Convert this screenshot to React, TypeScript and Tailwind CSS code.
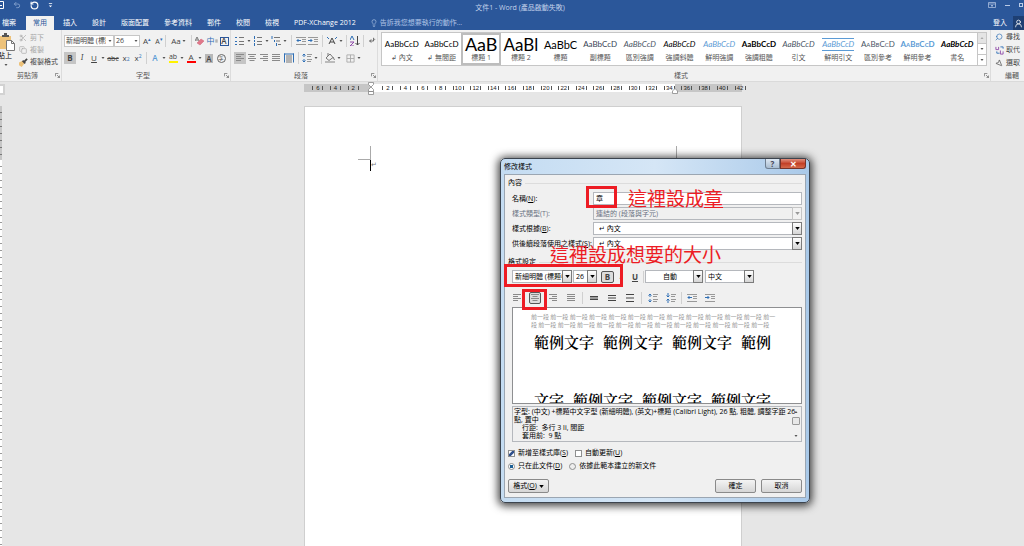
import type { ReactNode } from "react";
import { Lightbulb, RotateCw, Undo2, Search, Scissors, Copy, MousePointer2, UserRound } from "lucide-react";

const tabs = ["插入", "設計", "版面配置", "參考資料", "郵件", "校閱", "檢視", "PDF-XChange 2012"];

const styles = [
  { name: "↲ 內文", sample: "AaBbCcD", look: "text-[8px]" },
  { name: "↲ 無間距", sample: "AaBbCcD", look: "text-[8px]" },
  { name: "標題 1", sample: "AaB", look: "text-[18px]" },
  { name: "標題 2", sample: "AaBl", look: "text-[17px]" },
  { name: "標題", sample: "AaBbC", look: "text-[11px]" },
  { name: "副標題", sample: "AaBbCcD", look: "text-[8px] text-gray-700" },
  { name: "區別強調", sample: "AaBbCcD", look: "text-[8px] italic text-gray-600" },
  { name: "強調斜體", sample: "AaBbCcD", look: "text-[8px] italic" },
  { name: "鮮明強調", sample: "AaBbCcD", look: "text-[8px] italic text-[#5b9bd5]" },
  { name: "強調粗體", sample: "AaBbCcD", look: "text-[8px] font-bold" },
  { name: "引文", sample: "AaBbCcD", look: "text-[8px] italic text-gray-600" },
  { name: "鮮明引文", sample: "AaBbCcD", look: "text-[8px] italic text-[#5b9bd5] border-y border-[#5b9bd5]" },
  { name: "區別參考", sample: "AaBbCcD", look: "text-[8px] [font-variant:small-caps] text-gray-600" },
  { name: "鮮明參考", sample: "AaBbCcD", look: "text-[8px] [font-variant:small-caps] font-bold text-[#5b9bd5]" },
  { name: "書名", sample: "AaBbCcD", look: "text-[8px] font-bold italic" },
];

function Caret() {
  return (
    <svg viewBox="1 0 6 8" className="h-2 w-[6px] shrink-0" aria-hidden="true">
      <path d="M2.500 3h3L4 5z" fill="#555" />
    </svg>
  );
}

function Sep({ className = "mx-[2px]" }: { className?: string }) {
  return <span className={`h-3 w-px shrink-0 bg-[#d0d0d0] ${className}`} />;
}

function Tool({ label, className = "w-3", children }: { label: string; className?: string; children: ReactNode }) {
  return (
    <button type="button" aria-label={label} className={`flex h-3 shrink-0 items-center justify-center text-[8px] leading-none text-[#444] ${className}`}>
      {children}
    </button>
  );
}

function Glyph({ children, className = "h-[10px] w-[10px]" }: { children: ReactNode; className?: string }) {
  return (
    <svg viewBox="0 0 10 10" className={`shrink-0 ${className}`} fill="none" stroke="#777" aria-hidden="true">
      {children}
    </svg>
  );
}

function Lines({ kind }: { kind: "left" | "center" | "right" | "full" }) {
  const d = {
    left: "M1 1.5h8M1 3.5h5M1 5.5h8M1 7.5h5",
    center: "M1 1.5h8M2.5 3.5h5M1 5.5h8M2.5 7.5h5",
    right: "M1 1.5h8M4 3.5h5M1 5.5h8M4 7.5h5",
    full: "M1 1.5h8M1 3.5h8M1 5.5h8M1 7.5h8",
  }[kind];
  return <Glyph><path d={d} stroke="#8a8a8a" /></Glyph>;
}

function Indent({ out }: { out?: boolean }) {
  return (
    <Glyph>
      <path d="M0 1.5h10M6 3.5h4M6 5.5h4M0 8.5h10" stroke="#999" />
      <path d={out ? "M5 4.500H1M2.500 3 1 4.500 2.500 6" : "M0 4.500h4M2.500 3 4 4.500 2.500 6"} stroke="#2f6fb5" />
    </Glyph>
  );
}

function Spacing({ tight }: { tight?: boolean }) {
  return (
    <Glyph>
      <path d="M5 1.5h5M5 3.5h4M5 6.5h5M5 8.5h4" stroke="#999" />
      <path d={tight ? "M2 0v4M.5 2.500 2 4l1.500-1.500M2 10V6M.5 7.500 2 6l1.500 1.500" : "M2 4V1M.5 2.500 2 1l1.500 1.500M2 6v3M.5 7.500 2 9l1.500-1.500"} stroke="#2f6fb5" />
    </Glyph>
  );
}

function Group({ title, className, launcher = true, children }: { title: string; className: string; launcher?: boolean; children: ReactNode }) {
  return (
    <section className={`flex flex-col border-r border-[#dcdcdc] ${className}`}>
      <div className="flex h-10 flex-col gap-[5px] pt-[5px]">{children}</div>
      <div className="flex h-[10px] items-center pr-[1px]">
        <span className="flex-1 whitespace-nowrap text-center leading-none text-[#555]">{title}</span>
        {launcher && (
          <button type="button" aria-label={`${title}設定`}>
            <svg viewBox="0 0 6 6" className="h-[5px] w-[5px]" fill="none" stroke="#777">
              <path d="M.5 4V.5H4M2.5 2.5l3 3M5.5 3v2.5H3" />
            </svg>
          </button>
        )}
      </div>
    </section>
  );
}

function RibbonSelect({ label, value, className }: { label: string; value: string; className: string }) {
  return (
    <div className={`relative h-3 ${className}`}>
      <select aria-label={label} className="h-full w-full appearance-none overflow-hidden border border-[#c6c6c6] bg-white pr-[7px] pl-[1px] text-[7px] leading-[10px]">
        <option>{value}</option>
      </select>
      <span className="pointer-events-none absolute top-[2px] right-px bg-white"><Caret /></span>
    </div>
  );
}

function DialogSelect({ id, label, value, disabled, className = "w-full", pad = "pl-[2px]" }: { id?: string; label?: string; value: string; disabled?: boolean; className?: string; pad?: string }) {
  return (
    <div className={`relative h-[13px] shrink-0 ${className}`}>
      <select
        id={id}
        aria-label={label}
        disabled={disabled}
        className={`block h-full w-full appearance-none overflow-hidden border border-[#b5b8bd] pr-[9px] text-[7px] leading-[11px] ${pad} ${disabled ? "bg-[#f0f0f0] text-gray-500" : "bg-white text-black"}`}
      >
        <option>{value}</option>
      </select>
      <span className={`pointer-events-none absolute top-0 right-0 flex h-[13px] w-[10px] items-center justify-center border ${disabled ? "border-[#c5c5c5] bg-[#f2f2f2]" : "border-[#7b7b7b] bg-linear-to-b from-white to-[#d5d5d5]"}`}>
        <svg viewBox="0 0 6 4" className="h-[3px] w-[5px]" aria-hidden="true">
          <path d="M0 0h6L3 4z" fill={disabled ? "#999" : "#000"} />
        </svg>
      </span>
    </div>
  );
}

function TitleBar() {
  return (
    <header className="bg-[#2b579a] text-white">
      <div className="flex h-4 items-center">
        <div className="flex w-[52px] items-center gap-[9px] pb-[6px]">
          <button type="button" aria-label="儲存" className="w-1">
            <svg viewBox="0 0 4 8" className="h-2 w-1" fill="none" stroke="white"><path d="M0 .5h3.500v7H0M0 4.500h2" /></svg>
          </button>
          <button type="button" aria-label="復原" className="text-[#7c9bc9]"><Undo2 size={8} strokeWidth={3} /></button>
          <button type="button" aria-label="重複"><RotateCw size={9} strokeWidth={3} className="-scale-x-100" /></button>
          <button type="button" aria-label="自訂快速存取工具列">
            <svg viewBox="0 0 6 6" className="h-[5px] w-[5px]" fill="white"><path d="M1 0h4v1H1zM1 3h4L3 5z" /></svg>
          </button>
        </div>
        <h1 className="flex-1 text-center text-[7px] leading-[10px] text-[#c3d2ea]">文件1 - Word (產品啟動失敗)</h1>
        <div className="flex w-[36px] items-center gap-[9px] pb-[6px] text-[#b9cae6]">
          <button type="button" aria-label="功能區顯示選項">
            <svg viewBox="0 0 8 6" className="h-[6px] w-2" fill="none" stroke="currentColor"><path d="M.5.5h7v5h-7zM.5 2h7M4 5V3M3 4l1-1 1 1" strokeWidth=".7" /></svg>
          </button>
          <button type="button" aria-label="最小化" className="h-px w-[5px] bg-[#b9cae6]" />
          <button type="button" aria-label="還原" className="h-1 w-1 border border-current" />
        </div>
      </div>
      <nav className="flex h-[14px] items-center text-[7px] leading-[10px]">
        <button type="button" className="pl-[2px]">檔案</button>
        <button type="button" className="ml-[10px] h-[14px] bg-[#f1f1f1] px-[7px] text-[#2b579a]">常用</button>
        <div className="ml-[9px] flex gap-[15px]">
          {tabs.map((tab) => (
            <button key={tab} type="button" className="whitespace-nowrap">{tab}</button>
          ))}
        </div>
        <button type="button" className="ml-[14px] flex items-center gap-[2px] whitespace-nowrap text-[#afc4e6]">
          <Lightbulb size={8} />告訴我您想要執行的動作...
        </button>
        <span className="flex-1" />
        <button type="button">登入</button>
        <button type="button" aria-label="共用" className="ml-[6px] flex h-[14px] w-[11px] items-center justify-center bg-[#1e3f73]"><UserRound size={9} /></button>
      </nav>
    </header>
  );
}

function Ribbon() {
  return (
    <div className="flex border-b border-[#dadada] bg-[#f1f1f1] text-[7px] leading-[10px] text-[#444]">
      <Group title="剪貼簿" className="w-[62px] shrink-0">
        <div className="-mt-[2px] flex gap-1">
          <button type="button" className="flex w-[15px] flex-col items-start">
            <svg viewBox="0 0 15 18" className="h-[18px] w-[15px]" fill="none">
              <path d="M0 3h11v13H0z" fill="#edc27a" />
              <path d="M2 4V2h2V0h3v2h2v2z" fill="#555" />
              <path d="M6.500 7.500h5l3 3v7h-8z" fill="#fff" stroke="#777" />
              <path d="M11.500 7.500v3h3" stroke="#777" />
            </svg>
            <span className="-ml-[2px] whitespace-nowrap text-black">貼上</span>
            <span className="ml-[3px]"><Caret /></span>
          </button>
          <div className="flex flex-col gap-[2px] whitespace-nowrap">
            <button type="button" className="flex items-center gap-[3px] text-[#a6a6a6]"><Scissors size={8} />剪下</button>
            <button type="button" className="flex items-center gap-[3px] text-[#a6a6a6]"><Copy size={8} />複製</button>
            <button type="button" className="flex items-center gap-[2px]">
              <Glyph className="h-[9px] w-[9px]"><path d="m0 5 4-2 2 3-3 4-3-2z" fill="#edc27a" stroke="none" /><path d="m4 3 3 3M6 4l3-3" strokeWidth="2" stroke="#444" /></Glyph>
              複製格式
            </button>
          </div>
        </div>
      </Group>

      <Group title="字型" className="w-[169px] shrink-0">
        <div className="flex items-center pl-[2px]">
          <RibbonSelect label="字型" value="新細明體 (標題中文)" className="w-[50px]" />
          <RibbonSelect label="字型大小" value="26" className="w-[26px]" />
          <Tool label="放大字型" className="ml-px w-3">A<sup className="text-[5px] text-[#2f6fb5]">▴</sup></Tool>
          <Tool label="縮小字型"><span className="text-[7px]">A</span><sup className="text-[5px] text-[#2f6fb5]">▾</sup></Tool>
          <Sep className="mr-[3px]" />
          <Tool label="大小寫轉換" className="w-5">Aa<Caret /></Tool>
          <Sep />
          <Tool label="清除格式">
            <Glyph><path d="M0 5 2 1l2 4M1 4h2" /><path d="m2 7 4-4 3 2-4 4z" fill="#e0788a" stroke="#d06074" strokeWidth=".5" /></Glyph>
          </Tool>
          <Tool label="注音標示"><span className="text-[#2f6fb5]">中</span><Glyph className="h-2 w-[3px]"><path d="M1 1.500h8M1 5h8M1 8.500h8" strokeWidth="2" /></Glyph></Tool>
          <Tool label="圍繞字元"><span className="flex h-[9px] w-[9px] items-center justify-center border border-[#2b579a] text-[8px] font-semibold">A</span></Tool>
        </div>
        <div className="flex items-center pl-[2px]">
          <Tool label="粗體" className="w-3 bg-[#c5c5c5] font-bold">B</Tool>
          <Tool label="斜體" className="w-3 font-serif italic">I</Tool>
          <Tool label="底線" className="w-3 underline">U</Tool>
          <Caret />
          <Tool label="刪除線" className="w-[14px]"><span className="text-[7px] line-through">abc</span></Tool>
          <Tool label="下標">x<sub className="text-[5px] text-[#2f6fb5]">2</sub></Tool>
          <Tool label="上標">x<sup className="text-[5px] text-[#2f6fb5]">2</sup></Tool>
          <Sep />
          <Tool label="文字效果"><span className="font-semibold text-[#5b9bd5]">A</span></Tool>
          <Caret />
          <Tool label="醒目提示"><span className="w-[9px] border-b-2 border-[#fff200] text-[7px] leading-[8px]">ab</span></Tool>
          <Caret />
          <Tool label="字型色彩"><span className="w-[9px] border-b-2 border-[#f00] leading-[8px]">A</span></Tool>
          <Caret />
          <Tool label="字元網底"><span className="bg-[#b8b8b8] px-px leading-[9px] font-semibold">A</span></Tool>
          <Tool label="圍繞字"><span className="flex h-[9px] w-[9px] items-center justify-center rounded-full border border-[#666] text-[5px]">字</span></Tool>
        </div>
      </Group>

      <Group title="段落" className="w-[147px] shrink-0">
        <div className="flex items-center pl-[3px]">
          <Tool label="項目符號"><Glyph><path d="M4 1.500h5M4 5.500h5M4 8.500h5" /><path d="M0 1.500h2M0 5.500h2M0 8.500h2" stroke="#2f6fb5" /></Glyph></Tool>
          <Caret />
          <Tool label="編號"><Glyph><path d="M4 1.500h5M4 5.500h5M4 8.500h5" /><path d="M1.500 0v3M1.500 4v2M1.500 7v3" stroke="#2f6fb5" /></Glyph></Tool>
          <Caret />
          <Tool label="多層次清單"><Glyph><path d="M3 1.500h6M5 5h4M7 8.500h3" /><path d="M1 0v3M3.500 4v2M5.500 7v3" stroke="#2f6fb5" /></Glyph></Tool>
          <Caret />
          <Sep className="mx-[3px]" />
          <Tool label="減少縮排"><Indent out /></Tool>
          <Tool label="增加縮排"><Indent /></Tool>
          <Sep className="mx-[3px]" />
          <Tool label="亞洲方式配置"><Glyph><path d="m2 8 3-6 3 6M3 6h4" stroke="#444" /><path d="M0 1l2 2M10 1 8 3" stroke="#2f6fb5" /></Glyph></Tool>
          <Caret />
          <Sep />
          <Tool label="排序"><Glyph><path d="m0 4 2-4 2 4" stroke="#2f6fb5" /><path d="M0 6h4L0 10h4" stroke="#8e4ba8" /><path d="M7.500 0v9M5.500 7l2 2 2-2" stroke="#444" /></Glyph></Tool>
          <Sep />
          <Tool label="顯示編輯標記"><Glyph className="h-2 w-2"><path d="M7 1v4H2M4 3 2 5l2 2M8 3h1" stroke="#444" /></Glyph></Tool>
        </div>
        <div className="flex items-center pl-[3px]">
          <Tool label="靠左對齊" className="w-3 bg-[#c5c5c5]"><Lines kind="left" /></Tool>
          <Tool label="置中"><Lines kind="center" /></Tool>
          <Tool label="靠右對齊"><Lines kind="right" /></Tool>
          <Tool label="左右對齊"><Lines kind="full" /></Tool>
          <Tool label="分散對齊" className="w-[14px]"><Glyph><path d="M.5.500v9M9.500.500v9M0 1h10" stroke="#2f6fb5" /><path d="M2 3h6M2 5h6M2 7h6M2 9h6" /></Glyph></Tool>
          <Sep />
          <Tool label="行距"><Spacing /></Tool>
          <Caret />
          <Sep />
          <Tool label="網底"><Glyph><path d="m1 5 4-4 3 3.500-4 3zM8 4l1.500 3M3 0v3" /><path d="M0 9h10" stroke="#bbb" strokeWidth="2" /></Glyph></Tool>
          <Caret />
          <Tool label="框線" className="ml-[2px] w-3"><Glyph className="h-[9px] w-[9px]"><path d="M1 1h8v8H1zM5 1v8M1 5h8" stroke="#aaa" /></Glyph></Tool>
          <Caret />
        </div>
      </Group>

      <Group title="樣式" className="min-w-0 flex-1">
        <div className="-mt-[3px] mr-[3px] ml-[3px] flex h-[34px] shrink-0 border border-[#c6c6c6] bg-white">
          {styles.map((s) => (
            <button
              key={s.name}
              type="button"
              className={`flex min-w-0 flex-1 flex-col items-center overflow-hidden ${s.name === "標題 1" ? "border-2 border-[#bdbdbd]" : "p-[2px]"}`}
            >
              <span className="flex h-[18px] w-full items-center justify-center text-black">
                <span className={`font-[Lato,sans-serif] leading-[11px] ${s.look}`}>{s.sample}</span>
              </span>
              <span className="whitespace-nowrap text-[7px] leading-[10px] text-[#555]">{s.name}</span>
            </button>
          ))}
          <div className="flex w-[9px] shrink-0 flex-col divide-y divide-[#c6c6c6] border-l border-[#c6c6c6]">
            <button type="button" aria-label="上一列" className="flex flex-1 items-center justify-center bg-[#e4e4e4]"><span className="rotate-180 opacity-40"><Caret /></span></button>
            <button type="button" aria-label="下一列" className="flex flex-1 items-center justify-center"><Caret /></button>
            <button type="button" aria-label="其他" className="flex flex-1 items-center justify-center"><Caret /></button>
          </div>
        </div>
      </Group>

      <div className="flex w-[33px] shrink-0 flex-col gap-[3px] overflow-hidden whitespace-nowrap pt-[2px] pl-1">
        <button type="button" className="flex items-center gap-[3px]"><Search size={8} className="shrink-0 -scale-x-100 text-[#2f6fb5]" />尋找</button>
        <button type="button" className="flex items-center gap-[2px]"><Glyph className="h-[9px] w-[9px]"><path d="M1 1v3h3V1M6 5v4h3V6" stroke="#8e4ba8" /><path d="M2 6v2h3M6 1h3v2" stroke="#2f6fb5" /></Glyph>取代</button>
        <button type="button" className="flex items-center gap-[3px]"><MousePointer2 size={8} className="shrink-0 -scale-x-100 rotate-90" />選取<Caret /></button>
        <span className="pl-[10px] leading-[10px] text-[#555]">編輯</span>
      </div>
    </div>
  );
}

function RulerCells({ values, className }: { values: number[]; className: string }) {
  return (
    <div className={`flex shrink-0 ${className}`}>
      {values.map((n) => (
        <span key={n} className="flex flex-1 items-center justify-center">
          <span className="flex w-[11px] items-center justify-between">
            <i className="h-1 w-px shrink-0 bg-[#555]" />
            <b className="flex w-[9px] shrink-0 justify-center font-normal">{n}</b>
            <i className="h-1 w-px shrink-0 bg-[#555]" />
          </span>
        </span>
      ))}
    </div>
  );
}

function Ruler() {
  const main = Array.from({ length: 17 }, (_, i) => (i + 1) * 2);
  return (
    <div className="relative flex h-2 w-[438px] bg-linear-[90deg,#c6c6c6_66px,#fff_66px,#fff_371px,#c6c6c6_371px] pl-[5px] font-['Liberation_Sans',sans-serif] text-[6px] leading-[8px] text-[#222]">
      <RulerCells values={[6, 4, 2]} className="w-[53px]" />
      <div className="relative flex w-[17px] shrink-0 justify-center">
        <svg viewBox="0 0 6 13" className="absolute -top-[2px] h-[13px] w-[6px]" fill="#fff" stroke="#888" strokeWidth=".8">
          <path d="M.5.500h5v2L3 5 .5 2.500zM3 5l2.500 2.500v2h-5v-2zM.5 9.500h5v3h-5z" />
        </svg>
      </div>
      <RulerCells values={main} className="w-[299px]" />
      <div className="flex min-w-0 flex-1"><RulerCells values={[36, 38, 40, 42]} className="w-[71px]" /></div>
      <svg viewBox="0 0 6 6" className="absolute top-[4px] left-[368px] h-[6px] w-[6px]" fill="#fff" stroke="#888" strokeWidth=".8">
        <path d="M3 .5 5.500 3v2.500h-5V3z" />
      </svg>
    </div>
  );
}

function Document() {
  return (
    <main className="flex flex-1 flex-col">
      <div className="flex h-[24px] items-start pt-[2px]">
        <button type="button" aria-label="定位點" className="h-[11px] w-[5px] border-2 border-l-0 border-[#d2d2d2] bg-white" />
        <div className="flex flex-1 justify-center pl-[17px]"><Ruler /></div>
      </div>
      <div className="flex flex-1">
        <div className="flex w-[2px] flex-col bg-white">
          <div className="h-[54px] bg-[repeating-linear-gradient(#c6c6c6_0,#c6c6c6_6px,#777_6px,#777_7px)]" />
          <div className="flex-1 bg-[repeating-linear-gradient(#fff_0,#fff_6px,#999_6px,#999_7px)]" />
        </div>
        <div className="flex flex-1 justify-center pl-5">
          <div className="w-[438px] border border-b-0 border-[#cfcfcf] bg-white pt-[39px] pl-[53px]">
            <div className="flex h-[14px] w-[331px] justify-between">
              <span className="w-[13px] border-r border-b border-[#aaa]" />
              <span className="w-[13px] border-b border-l border-[#aaa]" />
            </div>
            <p className="flex h-[11px] items-center pl-3 text-[7px] text-[#777]"><span className="h-[11px] w-px bg-black" />↵</p>
          </div>
        </div>
      </div>
    </main>
  );
}

function Legend({ children }: { children: ReactNode }) {
  return (
    <legend className="flex w-full items-center gap-[3px] px-[3px] leading-[10px] after:h-px after:flex-1 after:bg-[#dcdcdc]">{children}</legend>
  );
}

function Key({ children }: { children: string }) {
  return <>(<u>{children}</u>)</>;
}

function Preview() {
  const word = "範例文字";
  return (
    <div className="mr-[3px] ml-[7px] h-[97px] overflow-hidden border border-[#8e8f91] bg-white text-black">
      <p className="px-[18px] pt-[5px] font-['Noto_Sans_CJK_TC',sans-serif] text-[6px] leading-[8px] whitespace-nowrap text-[#999]">
        {"前一段 ".repeat(12)}前一<br />段 {"前一段 ".repeat(12)}
      </p>
      <div className="px-[21px] font-['Noto_Serif_CJK_TC','Noto_Sans_CJK_TC',serif] text-[15px] leading-[22px] font-semibold whitespace-nowrap">
        <p className="mt-[2px] flex gap-[9px]"><span>{word}</span><span>{word}</span><span>{word}</span><span>範例</span></p>
        <p className="mt-[36px] flex gap-[9px]"><span>文字</span><span>{word}</span><span>{word}</span><span>{word}</span></p>
      </div>
    </div>
  );
}

function StyleDialog() {
  return (
    <div role="dialog" aria-label="修改樣式" className="absolute top-[158px] left-[500px] flex w-[310px] flex-col rounded-[5px] border border-[#3c444e] bg-linear-to-r from-[#c4dcf2] via-[#d5e6f6] to-[#a9c9e9] px-[3px] pb-1 text-[7px] leading-[10px] text-black shadow-[0_1px_8px_2px_rgba(0,0,0,0.75)]">
      <div className="flex h-[15px] items-start">
        <h2 className="flex-1 pt-[3px]">修改樣式</h2>
        <button type="button" aria-label="說明" className="h-[10px] w-[15px] rounded-bl-[3px] border border-t-0 border-[#6f7f91] bg-linear-to-b from-[#dde8f3] to-[#a9bdd1] text-center text-[8px] leading-[8px] font-bold text-[#445]">?</button>
        <button type="button" aria-label="關閉" className="h-[10px] w-[26px] rounded-br-[3px] border border-t-0 border-[#75332a] bg-linear-to-b from-[#e0907f] via-[#c34027] to-[#d4684a] text-center text-[8px] leading-[8px] font-bold text-white">✕</button>
      </div>
      <form className="border border-[#9ba6b2] bg-[#f0f0f0] pt-[3px] pb-[4px]" onSubmit={(e) => e.preventDefault()}>
        <fieldset>
          <Legend>內容</Legend>
          <div className="mt-[4px] grid grid-cols-[81px_1fr] items-center gap-y-[2px] pr-[3px] pl-[7px] whitespace-nowrap">
            <label htmlFor="name">名稱<Key>N</Key>:</label>
            <input id="name" defaultValue="章" className="h-[13px] w-full min-w-0 border border-[#b5b8bd] bg-white pb-[2px] pl-[2px]" />
            <label htmlFor="type" className="text-gray-500">樣式類型(T):</label>
            <DialogSelect id="type" value="連結的 (段落與字元)" disabled />
            <label htmlFor="based">樣式根據<Key>B</Key>:</label>
            <DialogSelect id="based" value="↵ 內文" pad="pl-[5px]" />
            <label htmlFor="next">供後續段落使用之樣式<Key>S</Key>:</label>
            <DialogSelect id="next" value="↵ 內文" pad="pl-[5px]" />
          </div>
        </fieldset>
        <fieldset className="mt-[7px]">
          <Legend>格式設定</Legend>
          <div className="mt-[3px] flex items-center pl-[7px]">
            <DialogSelect label="字型" value="新細明體 (標題中文)" className="w-[60px]" />
            <DialogSelect label="大小" value="26" className="ml-px w-6" />
            <Tool label="粗體" className="ml-1 w-[13px] rounded-[2px] border border-[#555] bg-[#dcdcdc] font-bold">B</Tool>
            <Tool label="斜體" className="w-[14px] font-serif font-bold italic">I</Tool>
            <Tool label="底線" className="w-[14px] font-bold underline">U</Tool>
            <Sep className="mx-px" />
            <DialogSelect label="字型色彩" value="自動" className="w-[58px]" pad="pl-[17px]" />
            <DialogSelect label="語言" value="中文" className="ml-[2px] w-[49px]" />
          </div>
          <div className="mt-[9px] mb-[3px] flex items-center gap-[6px] pl-[6px]">
            <Tool label="靠左"><Lines kind="left" /></Tool>
            <Tool label="置中" className="w-3 rounded-[2px] border border-[#555] bg-[#dcdcdc]"><Lines kind="center" /></Tool>
            <Tool label="靠右"><Lines kind="right" /></Tool>
            <Tool label="左右對齊"><Lines kind="full" /></Tool>
            <Sep className="-mx-px" />
            <Tool label="單行間距"><Glyph><path d="M1 3.500h8M1 5h8M1 6.500h8" stroke="#444" /></Glyph></Tool>
            <Tool label="1.5 倍行高"><Glyph><path d="M1 2.500h8M1 5h8M1 7.500h8" stroke="#444" /></Glyph></Tool>
            <Tool label="2 倍行高"><Glyph><path d="M1 1.500h8M1 5h8M1 8.500h8" stroke="#444" /></Glyph></Tool>
            <Sep className="-mx-px" />
            <Tool label="增加間距"><Spacing /></Tool>
            <Tool label="減少間距"><Spacing tight /></Tool>
            <Sep className="-mx-[2px]" />
            <Tool label="減少縮排"><Indent out /></Tool>
            <Tool label="增加縮排"><Indent /></Tool>
          </div>
        </fieldset>
        <Preview />
        <div className="mt-[2px] mr-[3px] ml-[7px] flex h-9 border border-[#b5b8bd] text-[7px] leading-[8px] whitespace-nowrap">
          <div className="min-w-0 flex-1 pt-px pl-[1px]">
            <p>字型: (中文) +標題中文字型 (新細明體), (英文)+標題 (Calibri Light), 26 點, 粗體, 調整字距 26<br />點, 置中</p>
            <p className="pl-2">行距: &nbsp;多行 3 li, 間距</p>
            <p className="pl-2">套用前: &nbsp;9 點</p>
          </div>
          <div className="flex w-[10px] shrink-0 flex-col items-center justify-between py-px">
            <span className="rotate-180"><Caret /></span>
            <span className="mb-[6px] h-2 w-2 rounded-[1px] border border-[#999] bg-[#e8e8e8]" />
            <Caret />
          </div>
        </div>
        <div className="mt-[6px] flex gap-[7px] px-[3px]">
          <label className="flex items-center gap-[3px]">
            <input type="checkbox" defaultChecked className="h-[7px] w-[7px] appearance-none border border-[#8e8f8f] bg-white checked:bg-[linear-gradient(135deg,#fff_25%,#30508c_40%,#30508c_60%,#fff_75%)]" />
            <span>新增至樣式庫<Key>S</Key></span>
          </label>
          <label className="flex items-center gap-[3px]">
            <input type="checkbox" className="h-[7px] w-[7px] appearance-none border border-[#8e8f8f] bg-white" />
            <span>自動更新<Key>U</Key></span>
          </label>
        </div>
        <div className="mt-[3px] flex gap-[7px] px-[3px]">
          <label className="flex items-center gap-[3px]">
            <input type="radio" name="scope" defaultChecked className="h-[7px] w-[7px] appearance-none rounded-full border border-[#8e8f8f] bg-white checked:bg-[radial-gradient(#1b5f95_45%,#fff_55%)]" />
            <span>只在此文件<Key>D</Key></span>
          </label>
          <label className="flex items-center gap-[3px]">
            <input type="radio" name="scope" className="h-[7px] w-[7px] appearance-none rounded-full border border-[#8e8f8f] bg-[#eee]" />
            <span>依據此範本建立的新文件</span>
          </label>
        </div>
        <div className="mt-[8px] flex gap-[5px] px-[3px]">
          <button type="button" className="flex h-[14px] w-[41px] items-center justify-center rounded-[2px] border border-[#8a8a8a] bg-linear-to-b from-[#f4f4f4] to-[#d6d6d6]">
            格式<Key>O</Key>
            <svg viewBox="0 0 6 4" className="ml-[2px] h-[3px] w-[5px]"><path d="M0 0h6L3 4z" /></svg>
          </button>
          <span className="flex-1" />
          <button type="submit" className="h-[14px] w-[41px] rounded-[2px] border border-[#8a8a8a] bg-linear-to-b from-[#f4f4f4] to-[#d6d6d6]">確定</button>
          <button type="button" className="h-[14px] w-[41px] rounded-[2px] border border-[#8a8a8a] bg-linear-to-b from-[#f4f4f4] to-[#d6d6d6]">取消</button>
        </div>
      </form>
    </div>
  );
}

function Notes() {
  return (
    <div className="pointer-events-none absolute inset-0 text-[19px] leading-[22px] whitespace-nowrap text-[#ed1c24]">
      <span className="absolute top-[186px] left-[586px] h-[22px] w-[31px] border-3 border-[#ed1c24]" />
      <p className="absolute top-[188px] left-[628px]">這裡設成<u>章</u></p>
      <p className="absolute top-[244px] left-[550px]">這裡設成想要的大小</p>
      <span className="absolute top-[264px] left-[504px] h-[23px] w-[119px] border-3 border-[#ed1c24]" />
      <span className="absolute top-[289px] left-[522px] h-[21px] w-[25px] border-3 border-[#ed1c24]" />
    </div>
  );
}

export default function App() {
  return (
    <div className="relative flex min-h-screen flex-col overflow-hidden bg-[#e6e6e6] font-['Open_Sans','Noto_Sans_CJK_TC',sans-serif]">
      <TitleBar />
      <Ribbon />
      <Document />
      <StyleDialog />
      <Notes />
    </div>
  );
}
